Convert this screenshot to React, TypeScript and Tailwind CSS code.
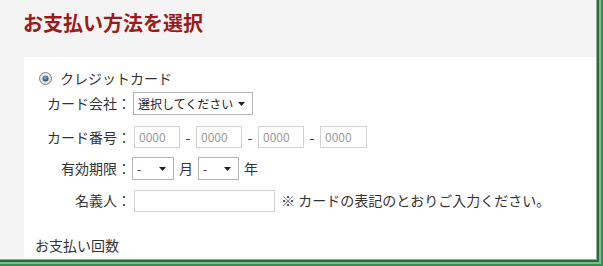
import React from "react";

const font = { fontFamily: '"Noto Sans CJK JP", "Noto Sans", sans-serif' };

const Radio = () => (
  <svg width="13" height="13" viewBox="0 0 13 13">
    <defs>
      <radialGradient id="rg" cx="50%" cy="40%" r="60%">
        <stop offset="0%" stopColor="#ffffff" />
        <stop offset="100%" stopColor="#d4d8de" />
      </radialGradient>
      <radialGradient id="dot" cx="45%" cy="35%" r="65%">
        <stop offset="0%" stopColor="#8fb4d8" />
        <stop offset="100%" stopColor="#1f3f66" />
      </radialGradient>
    </defs>
    <circle cx="6.5" cy="6.5" r="6" fill="url(#rg)" stroke="#7c838c" strokeWidth="1" />
    <circle cx="6.5" cy="6.5" r="3" fill="url(#dot)" />
  </svg>
);

const Arrow = () => (
  <svg width="7" height="4" viewBox="0 0 7 4">
    <path d="M0 0h7L3.5 4z" fill="#222" />
  </svg>
);

const Select = ({ label, w }: { label: string; w: string }) => (
  <div className={`${w} h-[23px] border border-[#b4b4b4] bg-white flex items-center pl-[4px] pr-[7px] text-[12px] text-[#222]`}>
    <span className="flex-1 whitespace-nowrap">{label}</span>
    <Arrow />
  </div>
);

const Input = ({ w, ph }: { w: string; ph?: string }) => (
  <div className={`${w} h-[22px] border border-[#d2d2d2] bg-white flex items-center pl-[4px] text-[12px] text-[#9a9a9a]`}>
    {ph}
  </div>
);

const Label = ({ children }: { children: React.ReactNode }) => (
  <div className="w-[97px] text-right text-[14px] text-[#333] pr-[1px] whitespace-nowrap">{children}</div>
);

export default function App() {
  return (
    <div style={font} className="w-[603px] h-[266px] overflow-hidden bg-[#2f6b42]">
      <div className="w-full h-full border-r-[2px] border-b-[2px] border-[#3d8a55]">
        <div className="w-full h-full border-r-[2px] border-b-[2px] border-[#74c08a]">
          <div className="w-full h-full border-r-[2px] border-b-[2px] border-[#2a6a3d]">
            <div className="w-full h-full border-r-[1px] border-b-[1px] border-[#9aa79e] bg-[#f4f4f4] flex flex-col">
              {/* Header */}
              <div className="h-[57px] pl-[23px] pt-[9px] shrink-0">
                <h1 className="text-[20px] font-bold text-[#9b1a1a] leading-[28px]">お支払い方法を選択</h1>
              </div>

              {/* Panel */}
              <div className="ml-[24px] flex-1 bg-white pl-[11px] pt-[11px] text-[#333]">
                <div className="flex items-center h-[20px] pl-[4px] gap-[8px]">
                  <Radio />
                  <span className="text-[14px]">クレジットカード</span>
                </div>

                <div className="flex items-center mt-[4px] h-[23px]">
                  <Label>カード会社：</Label>
                  <div className="ml-[1px]">
                    <Select label="選択してください" w="w-[120px]" />
                  </div>
                </div>

                <div className="flex items-center mt-[11px] h-[22px]">
                  <Label>カード番号：</Label>
                  <div className="ml-[2px] flex items-center text-[14px]">
                    <Input w="w-[46px]" ph="0000" />
                    <span className="w-[16px] text-center">-</span>
                    <Input w="w-[46px]" ph="0000" />
                    <span className="w-[16px] text-center">-</span>
                    <Input w="w-[46px]" ph="0000" />
                    <span className="w-[16px] text-center">-</span>
                    <Input w="w-[47px]" ph="0000" />
                  </div>
                </div>

                <div className="flex items-center mt-[9px] h-[23px]">
                  <Label>有効期限：</Label>
                  <div className="flex items-center text-[14px]">
                    <Select label="-" w="w-[42px]" />
                    <span className="mx-[5px]">月</span>
                    <Select label="-" w="w-[41px]" />
                    <span className="ml-[5px]">年</span>
                  </div>
                </div>

                <div className="flex items-center mt-[9px] h-[23px]">
                  <Label>名義人：</Label>
                  <div className="ml-[2px] flex items-center text-[14px]">
                    <Input w="w-[141px]" />
                    <span className="ml-[6px] whitespace-nowrap">※ カードの表記のとおりご入力ください。</span>
                  </div>
                </div>

                <div className="mt-[23px] text-[14px] leading-[20px]">お支払い回数</div>
              </div>
            </div>
          </div>
        </div>
      </div>
    </div>
  );
}
